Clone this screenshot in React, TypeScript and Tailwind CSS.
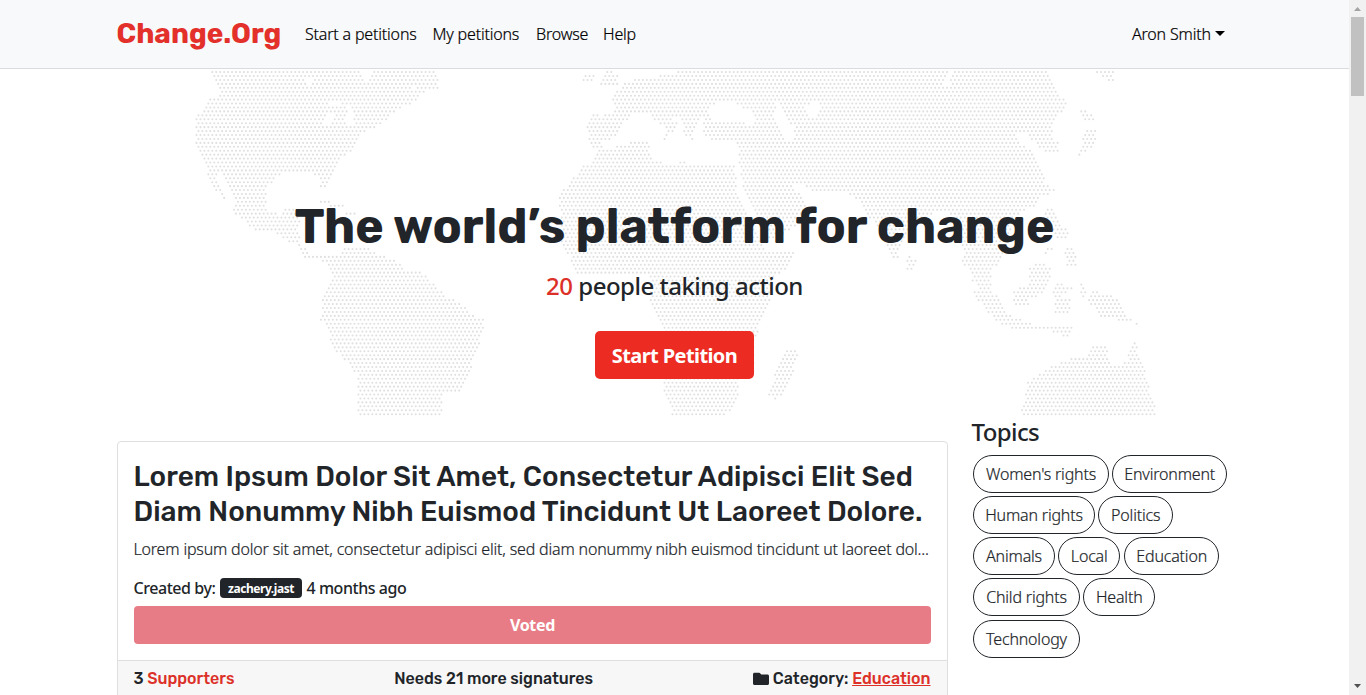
import type { ReactNode } from "react";

type Point = [number, number];

const toPoints = (s: string): Point[] =>
  s.split(" ").map((p) => p.split(",").map(Number) as Point);

const LAND: Point[][] = [
  // North and Central America
  "210,70 436,70 437,76 438,84 438,88 430,90 420,96 419,100 409,104 402,108 393,112 391,117 383,123 373,129 364,133 358,140 356,147 349,152 341,160 335,167 333,173 330,180 328,188 319,188 321,180 313,174 285,173 278,176 272,183 266,190 267,200 268,213 280,214 284,209 296,209 300,214 300,222 298,228 300,240 303,245 310,252 312,254 308,262 302,252 296,244 283,240 276,233 254,230 245,222 237,215 230,213 236,208 236,203 233,195 227,184 220,174 217,178 222,186 227,198 222,198 216,190 209,181 207,170 207,164 203,158 196,146 195,125 197,114 203,113 207,102 209,98 218,98 218,94 221,90 214,83",
  // Caribbean
  "314,200 325,200 343,205 343,208 330,207",
  "345,211 358,211 358,216 346,216",
  // South America
  "309,256 338,255 340,252 346,248 367,248 374,252 388,258 402,264 404,269 416,271 426,275 437,286 446,296 462,304 466,309 475,315 483,319 483,328 479,345 472,365 470,375 462,391 448,391 443,397 441,416 358,416 358,376 349,365 343,358 332,347 329,335 326,326 319,320 322,310 321,300 327,288 333,277 330,269 322,262",
  // North Atlantic islands
  "583,74 595,74 593,82 583,81",
  "606,71 612,71 619,76 618,84 600,85 604,78",
  // Europe and Asia
  "677,70 673,74 658,75 657,78 633,79 630,83 622,84 620,90 611,94 613,100 614,107 611,113 601,117 594,113 590,118 587,127 589,134 588,142 594,148 603,149 601,143 610,141 614,137 619,129 626,121 634,112 651,112 655,122 664,126 668,131 663,139 667,140 673,131 678,124 672,119 680,117 684,125 682,139 687,136 692,140 696,126 703,118 704,124 704,135 713,140 733,139 739,147 739,160 741,176 742,183 747,195 752,208 760,225 765,243 790,232 800,222 808,212 806,200 800,193 787,183 797,183 818,193 845,193 860,203 866,212 875,225 885,240 893,257 898,257 903,243 910,228 925,218 935,213 950,213 960,227 962,243 965,255 960,264 970,270 973,283 982,290 992,288 992,270 1002,262 1005,250 1012,235 1010,222 1020,212 1038,205 1045,187 1045,177 1040,163 1032,152 1020,141 1018,135 1028,135 1033,142 1043,151 1058,151 1058,143 1053,137 1052,123 1062,112 1066,103 1058,90 1047,70",
  // Africa
  "598,149 620,146 637,141 648,141 650,150 652,158 664,163 672,165 684,161 697,166 735,166 736,184 738,192 744,205 752,222 764,243 767,250 795,251 790,268 775,275 768,310 761,320 755,340 754,372 738,380 738,400 727,415 672,416 670,407 664,395 664,328 655,315 651,305 650,290 648,274 578,274 573,266 570,256 563,248 560,232 562,212 558,202 563,190 572,180 580,168 590,163",
  "788,349 795,349 798,355 792,375 783,395 775,400 766,395 775,375",
  // Asian islands
  "1093,70 1112,70 1117,81 1107,81",
  "1079,110 1085,110 1095,114 1093,120 1082,120",
  "1085,129 1096,129 1097,143 1093,148 1083,152 1078,156 1077,153 1083,148 1083,140",
  "1046,184 1056,190 1048,196 1041,195",
  "907,256 918,258 910,273 906,268",
  "1044,208 1052,208 1060,225 1069,232 1068,240 1058,238 1050,228",
  "1043,250 1052,246 1052,252 1045,254",
  "1065,247 1075,249 1077,265 1066,266",
  "1028,267 1042,263 1050,268 1050,282 1044,295 1027,298 1030,308 1013,307 1013,290 1028,285",
  "1055,283 1072,286 1072,290 1060,296 1072,299 1070,313 1055,313 1054,303 1053,290",
  "1081,279 1089,292 1085,297 1080,296",
  "1085,303 1094,290 1120,299 1128,316 1137,324 1120,320 1100,317 1094,305",
  "971,290 985,286 1003,302 1008,314 1022,319 1033,325 1072,326 1072,332 1065,338 1048,330 1010,328 1000,325 988,312 978,300",
  // Australia
  "1090,345 1109,345 1108,358 1113,364 1123,365 1128,358 1131,342 1135,342 1141,360 1147,378 1150,390 1156,402 1156,416 1020,416 1022,408 1025,400 1028,382 1040,373 1055,365 1070,358 1086,357",
].map(toPoints);

const WATER: Point[][] = [
  "306,79 312,79 311,87 306,85",
  "362,70 371,70 368,84 363,80",
  "325,102 340,101 340,106 330,106",
  "347,107 353,108 355,125 351,127 346,120",
  "330,113 336,114 328,125 322,124",
  "412,86 418,86 417,90 412,90",
  "949,70 954,70 949,85 944,84",
  "776,95 783,112 788,122 794,127 794,141 785,141 780,130 775,115",
  "806,107 810,103 817,103 821,109 818,117 810,118",
  "715,104 735,99 740,108 753,112 756,118 754,124 735,122 720,122 708,118 710,108",
].map(toPoints);

const inside = (x: number, y: number, poly: Point[]) => {
  let hit = false;
  for (let i = 0, j = poly.length - 1; i < poly.length; j = i++) {
    const [xi, yi] = poly[i];
    const [xj, yj] = poly[j];
    if (yi > y !== yj > y && x < ((xj - xi) * (y - yi)) / (yj - yi) + xi) hit = !hit;
  }
  return hit;
};

const buildDots = () => {
  let d = "";
  for (let row = 0; row < 88; row++) {
    const y = 72.1 + row * 3.932;
    for (let col = 0; col < 250; col++) {
      const x = 188.6 + col * 3.95 + (row % 2 ? 1.975 : 0);
      if (LAND.some((p) => inside(x, y, p)) && !WATER.some((p) => inside(x, y, p))) {
        d += `M${x.toFixed(2)} ${(y - 69).toFixed(2)}h0`;
      }
    }
  }
  return d;
};

const DOTS = buildDots();

const WorldMap = () => (
  <svg className="absolute inset-0" width="1349" height="348" fill="none">
    <path d={DOTS} stroke="#e0e0e0" strokeWidth="2.1" strokeLinecap="round" />
  </svg>
);

const NavLink = ({ className, children }: { className: string; children: ReactNode }) => (
  <a href="#" className={`whitespace-nowrap ${className}`}>
    {children}
  </a>
);

const TOPICS: { name: string; width: string }[][] = [
  [
    { name: "Women's rights", width: "w-[136px]" },
    { name: "Environment", width: "w-[115px]" },
  ],
  [
    { name: "Human rights", width: "w-[122px]" },
    { name: "Politics", width: "w-[75px]" },
  ],
  [
    { name: "Animals", width: "w-[82px]" },
    { name: "Local", width: "w-[62px]" },
    { name: "Education", width: "ml-[0.8px] w-[95px]" },
  ],
  [
    { name: "Child rights", width: "w-[107px]" },
    { name: "Health", width: "w-[72px]" },
  ],
  [{ name: "Technology", width: "w-[107px]" }],
];

const Topics = () => (
  <aside className="w-[260px] pt-[1px]">
    <h4 className="text-[24px] leading-[30px] font-medium tracking-[-0.6px]">Topics</h4>
    <div className="mt-2 ml-px flex flex-col gap-[3px]">
      {TOPICS.map((row) => (
        <div key={row[0].name} className="flex gap-[3.2px] last:mt-px">
          {row.map((t) => (
            <a
              key={t.name}
              href="#"
              className={`flex h-[38px] shrink-0 items-center justify-center rounded-full border border-[#212529] pl-px text-[16px] font-light whitespace-nowrap tracking-[-0.18px] [-webkit-text-stroke:0.2px] ${t.width}`}
            >
              {t.name}
            </a>
          ))}
        </div>
      ))}
    </div>
  </aside>
);

const FolderIcon = () => (
  <svg width="16" height="16" viewBox="0 0 16 16" fill="currentColor">
    <path d="M1.5 1.8h4.6c.5 0 .9.2 1.2.6l1 1.2h6.2c.8 0 1.5.7 1.5 1.5v7.4c0 .8-.7 1.5-1.5 1.5h-13C.7 14 0 13.3 0 12.5V3.3c0-.8.7-1.5 1.5-1.5z" />
  </svg>
);

const PetitionCard = () => (
  <article className="mt-[25px] w-[831px] rounded-[4px] border border-[#dfdfdf] bg-white">
    <div className="px-4 pt-[17px] pb-4">
      <h3 className="font-['Rubik','Roboto',sans-serif] text-[28px] leading-[35px] font-medium whitespace-nowrap">
        <span className="block tracking-[0.02px]">Lorem Ipsum Dolor Sit Amet, Consectetur Adipisci Elit Sed</span>
        <span className="block tracking-[0.02px]">Diam Nonummy Nibh Euismod Tincidunt Ut Laoreet Dolore.</span>
      </h3>
      <p className="mt-[8px] text-[16px] leading-6 font-light whitespace-nowrap tracking-[-0.18px] [-webkit-text-stroke:0.2px]">
        Lorem ipsum dolor sit amet, consectetur adipisci elit, sed diam nonummy nibh euismod tincidunt ut laoreet dol...
      </p>
      <div className="mt-[15px] flex h-6 items-center text-[16px] font-medium whitespace-nowrap tracking-[-0.45px]">
        <span className="w-[86px]">Created by:</span>
        <span className="flex h-5 w-[82px] items-center justify-center rounded-[4px] bg-[#212529] pt-px pl-px text-[12px] font-bold tracking-[-0.45px] text-white">
          zachery.jast
        </span>
        <span className="ml-[5px]">4 months ago</span>
      </div>
      <button className="mt-[6px] block h-[38px] w-full rounded-[4px] bg-[#e87c86] pl-px text-[16px] font-bold tracking-[-0.3px] text-white">
        Voted
      </button>
    </div>
    <footer className="flex h-[42px] items-center justify-between border-t border-[#dfdfdf] bg-[#f7f7f7] px-4 pb-[5px] font-['Rubik','Roboto',sans-serif] text-[16px] font-medium whitespace-nowrap">
      <span>
        3 <span className="text-[#dc3028]">Supporters</span>
      </span>
      <span>Needs 21 more signatures</span>
      <span className="flex items-center gap-1">
        <FolderIcon />
        <span>
          Category: <a href="#" className="text-[#dc3028] underline">Education</a>
        </span>
      </span>
    </footer>
  </article>
);

const Scrollbar = () => (
  <div className="flex w-[17px] flex-col items-center bg-[#f1f1f1]">
    <svg width="17" height="17" viewBox="0 0 17 17">
      <path d="M5 11l3.5-4 3.5 4z" fill="#a3a3a3" />
    </svg>
    <div className="h-[79px] w-[13px] bg-[#c1c1c1]" />
    <svg className="mt-auto" width="17" height="17" viewBox="0 0 17 17">
      <path d="M5 6l3.5 4L12 6z" fill="#505050" />
    </svg>
  </div>
);

export default function App() {
  return (
    <div className="flex h-[695px] w-[1366px] overflow-hidden bg-white font-['Noto_Sans',sans-serif] text-[#212529]">
      <div className="w-[1349px]">
        <header className="flex h-[69px] items-center border-b border-[#dadcdf] bg-[#f8f9fa] px-[116.5px] text-[16px] font-light text-black">
          <a
            href="#"
            className="w-[188.5px] font-['Rubik','Roboto',sans-serif] text-[28px] leading-[42px] font-bold whitespace-nowrap text-[#e3302a]"
          >
            Change.Org
          </a>
          <nav className="flex flex-1 tracking-[-0.18px] [-webkit-text-stroke:0.2px]">
            <NavLink className="w-[127.5px]">Start a petitions</NavLink>
            <NavLink className="w-[103.5px]">My petitions</NavLink>
            <NavLink className="w-[67px]">Browse</NavLink>
            <NavLink className="w-[40px]">Help</NavLink>
          </nav>
          <button className="mr-[7.5px] flex items-center gap-1 whitespace-nowrap tracking-[-0.15px] [-webkit-text-stroke:0.2px]">
            <span>Aron Smith</span>
            <svg className="-mt-[2px]" width="10" height="5" viewBox="0 0 10 5" fill="currentColor">
              <path d="M0 0h10L5 5z" />
            </svg>
          </button>
        </header>
        <section className="relative h-[347px]">
          <WorldMap />
          <div className="relative flex flex-col items-center pt-[129px]">
            <h1 className="font-['Rubik','Roboto',sans-serif] text-[48px] leading-[58px] font-bold whitespace-nowrap">
              The world’s platform for change
            </h1>
            <p className="mt-[15px] text-[24px] leading-[29px] font-medium whitespace-nowrap tracking-[-0.5px]">
              <span className="text-[#dc3028]">20</span> people taking action
            </p>
            <button className="mt-[31px] h-[48px] w-[159px] rounded-[5px] bg-[#ec2c22] pt-px text-[20px] font-bold whitespace-nowrap tracking-[-0.6px] text-white">
              Start Petition
            </button>
          </div>
        </section>
        <main className="flex gap-6 pl-[116.5px]">
          <PetitionCard />
          <Topics />
        </main>
      </div>
      <Scrollbar />
    </div>
  );
}
